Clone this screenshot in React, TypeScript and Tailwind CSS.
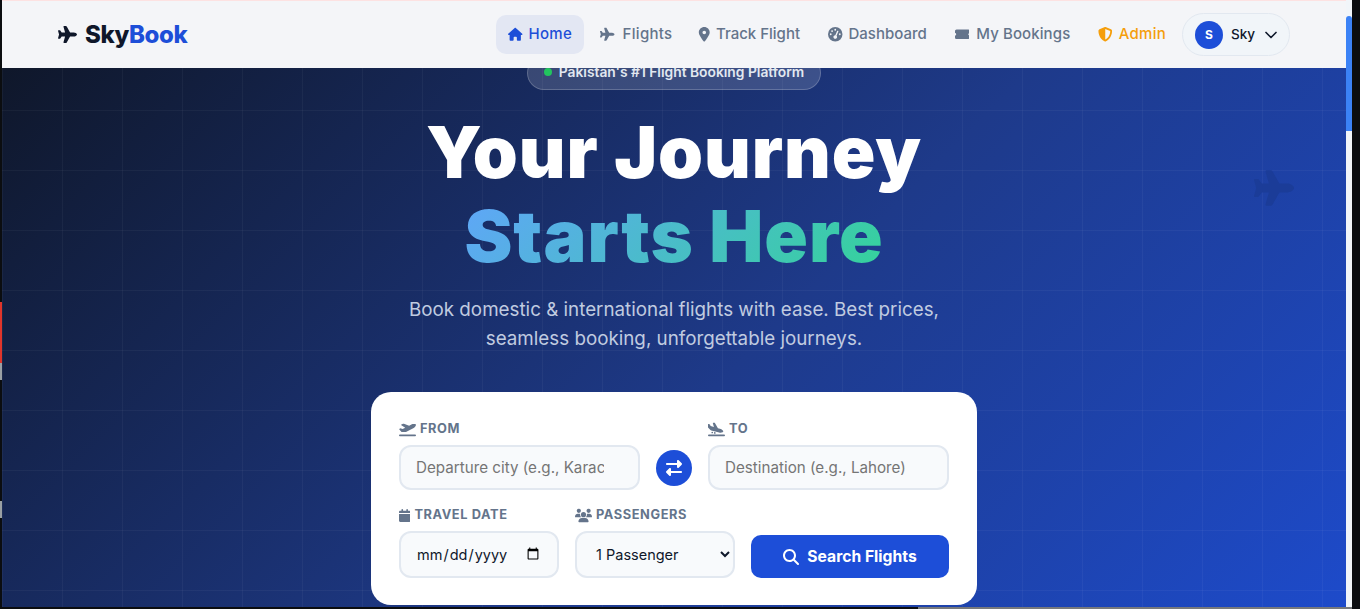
import { ChevronDown } from "lucide-react";
import { FaPlane, FaHouse, FaLocationDot, FaGaugeHigh, FaTicketSimple, FaShieldHalved, FaPlaneDeparture, FaPlaneArrival, FaCalendar, FaUsers, FaRightLeft, FaMagnifyingGlass } from "react-icons/fa6";

const navLinks = [
  { label: "Flights", icon: FaPlane, tweak: "gap-[8px] px-[12px] tracking-[0.3px]" },
  { label: "Track Flight", icon: FaLocationDot, tweak: "gap-[4px] pl-[9px] pr-[12px]" },
  { label: "Dashboard", icon: FaGaugeHigh, tweak: "gap-[6px] px-[12px]" },
  { label: "My Bookings", icon: FaTicketSimple, tweak: "gap-[7px] px-[12px] tracking-[0.1px]" },
];

function Navbar() {
  return (
    <nav className="relative z-10 flex h-[68px] shrink-0 items-center justify-between border-t border-[#fde2e2] bg-[#f4f5f8] pl-[56px] pr-[56px]">
      <a className="flex items-center gap-[8px] text-[24px] font-extrabold tracking-[-0.4px] text-[#0f172a]">
        <FaPlane className="h-[19px] w-auto" />
        <span>
          Sky<span className="text-[#1d4ed8]">Book</span>
        </span>
      </a>
      <div className="flex items-center gap-[4px]">
        <a className="flex h-[39px] items-center gap-[6px] rounded-[10px] bg-[#e3e7f3] px-[12px] text-[15px] font-medium tracking-[0.3px] text-[#1d4ed8]">
          <FaHouse className="h-[14.5px] w-auto" />
          Home
        </a>
        {navLinks.map((link) => {
          const Icon = link.icon;
          return (
            <a key={link.label} className={`flex h-[39px] items-center text-[15px] font-medium text-[#64748b] ${link.tweak}`}>
              <Icon className="h-[14.5px] w-auto" />
              {link.label}
            </a>
          );
        })}
        <a className="flex h-[39px] items-center gap-[6px] px-[12px] text-[15px] font-medium tracking-[0.25px] text-[#f59e0b]">
          <FaShieldHalved className="h-[14.5px] w-auto" />
          Admin
        </a>
        <button className="flex h-[43px] w-[108px] items-center gap-[8px] rounded-full border border-[#e2e8f0] bg-[#f1f5f9] pl-[12px] text-[13.5px] font-medium text-[#0f172a]">
          <span className="flex h-[28px] w-[28px] items-center justify-center rounded-full bg-[#1d4ed8] text-[12px] font-bold text-white">S</span>
          Sky
          <ChevronDown size={20} strokeWidth={2} className="ml-[-2px]" />
        </button>
      </div>
    </nav>
  );
}

function FieldLabel({ icon: Icon, text, iconClass }: { icon: typeof FaPlane; text: string; iconClass: string }) {
  return (
    <label className="mb-[9px] flex h-[16px] items-center gap-[4px] pt-[2px] text-[12.8px] font-bold tracking-[0.6px] text-[#64748b]">
      <Icon className={iconClass} />
      {text}
    </label>
  );
}

const wideIcon = "h-[15px] w-[17px]";
const fieldClass =
  "w-full rounded-[12px] border-2 border-[#e2e8f0] bg-[#f8fafc] px-[15px] text-[14.5px] text-[#0f172a] outline-none";
const placeholderClass = "h-[45px] pr-[34px] text-[15.2px] placeholder:text-[#757575]";

function SearchCard() {
  return (
    <form className="mx-auto mt-[39px] w-[606px] rounded-[20px] bg-white px-[28px] pb-[27px] pt-[28px]">
      <div className="flex items-end gap-[16px]">
        <div className="w-[241px]">
          <FieldLabel icon={FaPlaneDeparture} text="FROM" iconClass={wideIcon} />
          <input className={`${fieldClass} ${placeholderClass}`} placeholder="Departure city (e.g., Karachi)" />
        </div>
        <button type="button" className="mb-[4px] flex h-[36px] w-[36px] items-center justify-center rounded-full bg-[#1d4ed8] text-white">
          <FaRightLeft className="h-[16px] w-auto" />
        </button>
        <div className="w-[241px]">
          <FieldLabel icon={FaPlaneArrival} text="TO" iconClass={wideIcon} />
          <input className={`${fieldClass} ${placeholderClass}`} placeholder="Destination (e.g., Lahore)" />
        </div>
      </div>
      <div className="mt-[16px] flex items-end gap-[16px]">
        <div className="w-[160px]">
          <FieldLabel icon={FaCalendar} text="TRAVEL DATE" iconClass="h-[13px] w-[11.4px]" />
          <input type="date" className={`${fieldClass} h-[47px]`} />
        </div>
        <div className="w-[160px]">
          <FieldLabel icon={FaUsers} text="PASSENGERS" iconClass={wideIcon} />
          <select className={`${fieldClass} h-[47px]`} defaultValue="1">
            <option value="1">1 Passenger</option>
          </select>
        </div>
        <button type="button" className="flex h-[43px] flex-1 items-center justify-center gap-[8px] rounded-[10px] bg-[#1d4ed8] text-[15.7px] font-bold text-white">
          <FaMagnifyingGlass className="h-[16px] w-auto" />
          Search Flights
        </button>
      </div>
    </form>
  );
}

export default function App() {
  return (
    <div className="relative flex h-[609px] w-[1360px] flex-col overflow-hidden bg-[#0b0d10] font-['Inter',sans-serif]">
      <div className="flex h-[607px] w-[1352px] shrink-0">
        <div className="flex h-full w-[1346px] shrink-0 flex-col overflow-hidden pl-[2px]">
          <Navbar />
          <header className="relative flex-1 overflow-hidden bg-[#1d4ed8] bg-[linear-gradient(135deg,#0f172a_0%,#1e3a8a_50%,#1d4ed8_100%)] bg-[size:100%_720px] bg-no-repeat">
            <div className="absolute inset-0 bg-[linear-gradient(rgba(255,255,255,0.04)_1px,transparent_1px),linear-gradient(90deg,rgba(255,255,255,0.04)_1px,transparent_1px)] bg-[size:60px_60px] bg-[position:0_-18px]" />
            <FaPlane className="absolute left-[1252px] top-[100px] h-[40px] w-[40px] text-[#1b3c98]" />
            <div className="relative text-center">
              <div className="mx-auto mt-[-12px] flex h-[34px] w-[294px] items-center justify-center gap-[7px] rounded-full border border-white/20 bg-white/15 pb-[2px] text-[13.8px] font-semibold text-[#e2e8f0]">
                <span className="h-[8px] w-[8px] rounded-full bg-[#22c55e]" />
                Pakistan's #1 Flight Booking Platform
              </div>
              <h1 className="mt-[20px] text-[72px] font-black leading-[84px] tracking-[1px] text-white">
                Your Journey
                <br />
                <span className="bg-[linear-gradient(135deg,#60a5fa,#34d399)] bg-clip-text text-transparent">Starts Here</span>
              </h1>
              <p className="mt-[17px] text-[18.8px] leading-[29px] text-[#c0cbe0]">
                Book domestic &amp; international flights with ease. Best prices,
                <br />
                seamless booking, unforgettable journeys.
              </p>
              <SearchCard />
            </div>
          </header>
        </div>
        <div className="h-full flex-1 bg-[#f1f5f9]">
          <div className="mt-[16px] h-[115px] rounded-t-full bg-[#3b82f6]" />
        </div>
      </div>
      <div className="flex h-[2px] w-[1352px] shrink-0">
        <div className="w-[918px]" />
        <div className="flex-1 bg-[#77797c]" />
      </div>
      {/* window edge marks on the left */}
      <span className="absolute left-0 top-[302px] h-[61px] w-[2px] bg-[#e0352b]" />
      <span className="absolute left-0 top-[363px] h-[17px] w-[2px] bg-[#9aa0a4]" />
      <span className="absolute left-0 top-[501px] h-[17px] w-[2px] bg-[#9aa0a4]" />
    </div>
  );
}
